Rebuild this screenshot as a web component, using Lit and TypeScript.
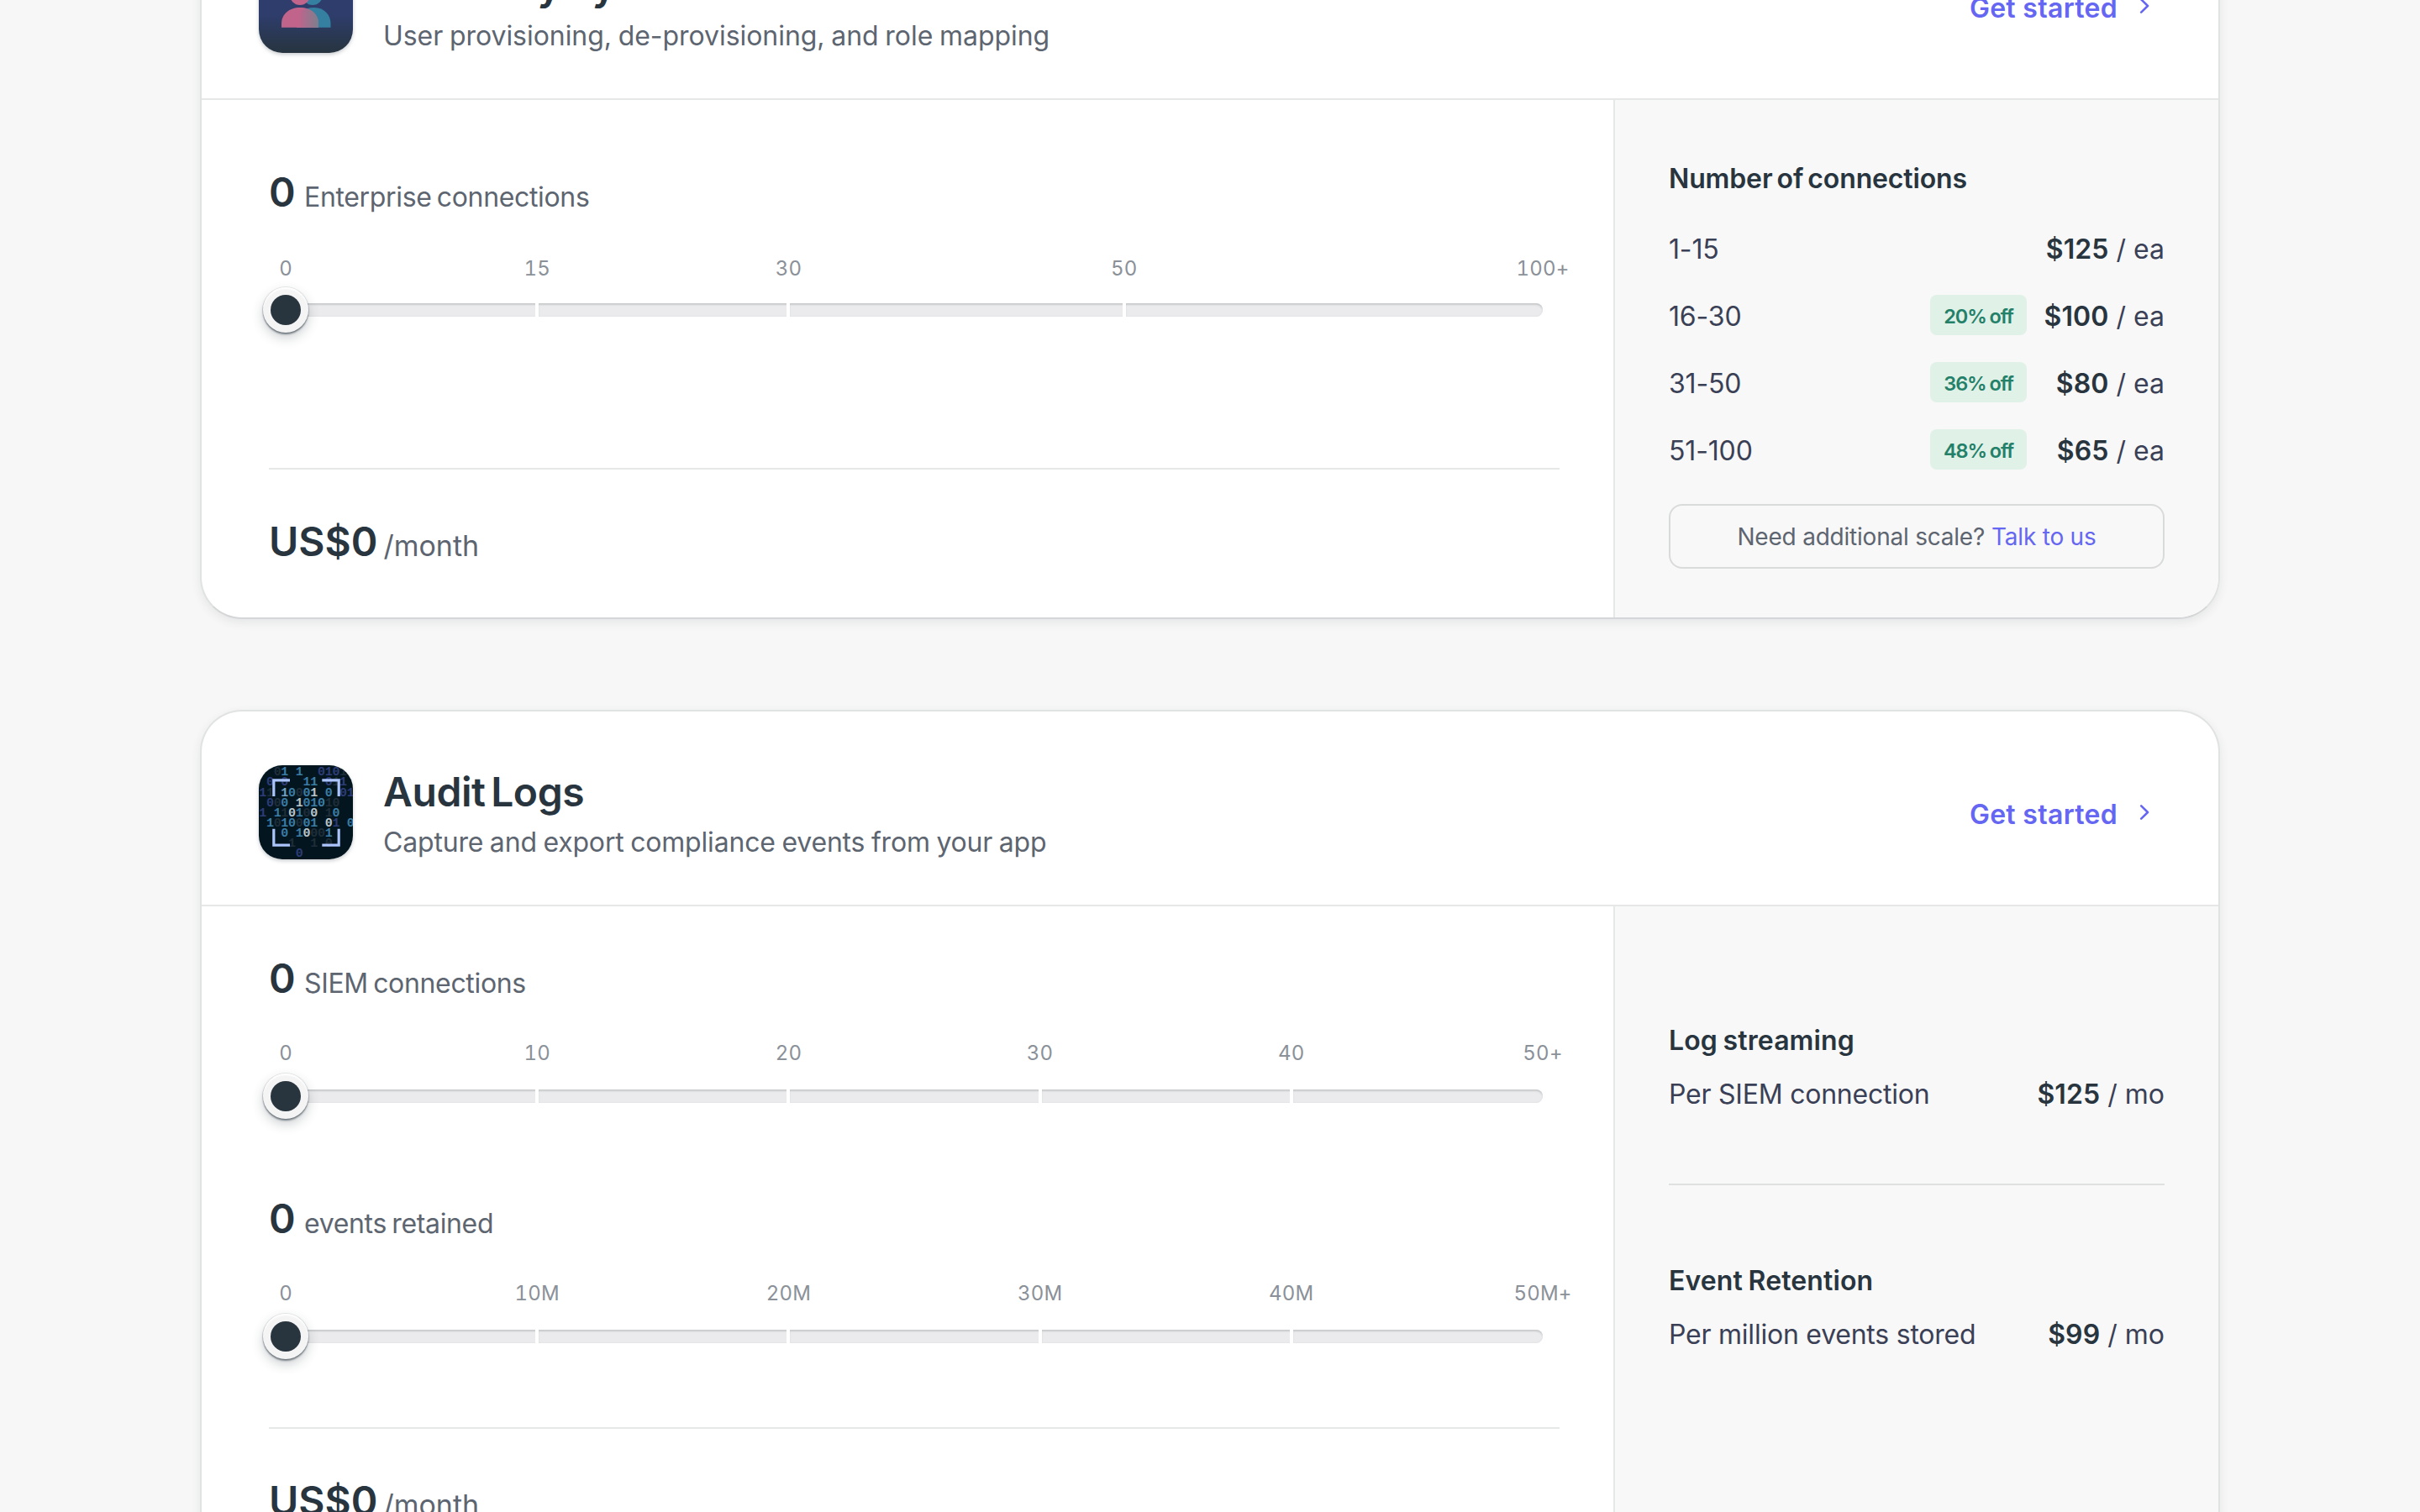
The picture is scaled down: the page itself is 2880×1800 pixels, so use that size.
import { LitElement, html, css, svg, nothing } from "lit";

const sheet = css`
  :host { display: block; }
  * { box-sizing: border-box; margin: 0; }
`;

type Mark = { at: number; label: string };

/* Glyph grid behind the audit icon: [column, digit, tone] per row. */
const TONES: Record<string, string> = {
  d: "#1f2d39", i: "#2d3c76", b: "#3b7ca5", l: "#73a2c0", w: "#b9c4ca",
};
const GRID: string[] = [
  "2:0d 3:1b 5:1b 8:0i 9:1i 10:0i 11:1d",
  "1:0i 3:0i 6:1b 7:1b 9:0i 10:1d 11:1i",
  "0:1i 1:1d 3:1l 4:0b 5:0d 6:0b 7:1w 9:0b 11:0i 12:1i",
  "1:0i 2:0d 3:0b 5:1w 6:0b 7:1b 8:0b 9:1d 10:0d",
  "0:1i 2:1b 3:1d 4:0w 5:1b 6:0d 7:0w 9:1d 10:0b",
  "1:1b 2:0d 3:1b 4:0b 5:0d 6:0b 7:1b 9:0w 10:1i 12:0b",
  "3:0b 5:1b 6:0w 7:0d 8:0d 9:1b",
  "4:1d 7:1d 9:0d",
  "5:0i",
];

class PriceSlider extends LitElement {
  static properties = { count: {}, unit: {}, marks: { attribute: false } };
  declare count: string;
  declare unit: string;
  declare marks: Mark[];
  static styles = [sheet, css`
    .count { display: flex; align-items: baseline; height: 64px; line-height: 64px; }
    .num { font-size: 48px; font-weight: 600; color: #28353f; width: 42px; }
    .unit { font-size: 32px; font-weight: 370; color: #5d6570; letter-spacing: -0.34px; word-spacing: -2.4px; }
    .scale { margin: var(--scale-gap, 43px) 20px 0; display: grid; height: 32px; line-height: 32px; font-size: 24px;
      font-weight: 370; color: #8b9199; font-variant-numeric: tabular-nums; letter-spacing: 0.2px; }
    .stop { width: 0; display: flex; justify-content: center; white-space: nowrap; }
    .track { position: relative; margin: var(--track-gap, 25px) 20px 0; height: 16px; display: grid; }
    .seg { background: #ebebed; box-shadow: inset 0 3px 2px -1px #c8cacc, inset 0 0 2px #d8d9dc; }
    .seg + .seg { border-left: 4px solid #fff; margin-left: -2px; }
    .seg.last { border-radius: 0 8px 8px 0; }
    .knob { position: absolute; left: -27px; top: -19px; width: 54px; height: 54px; border-radius: 50%;
      background: #f4f4f4; display: grid; place-items: center;
      box-shadow: inset 0 2px 2px #fff, 0 0 0 1px rgba(40,53,63,.10), 0 2px 2px rgba(40,53,63,.55), 0 6px 14px rgba(40,53,63,.24); }
    .dot { width: 36px; height: 36px; border-radius: 50%; background: #28353f; }
  `];
  render() {
    const steps = this.marks.slice(1).map((m, i) => m.at - this.marks[i].at);
    const cols = steps.map((s) => `minmax(0, ${s}fr)`).join(" ");
    return html`
      <div class="count"><span class="num">${this.count}</span><span class="unit">${this.unit}</span></div>
      <div class="scale" style="grid-template-columns: ${cols} 0">
        ${this.marks.map((m) => html`<span class="stop"><span>${m.label}</span></span>`)}
      </div>
      <div class="track" style="grid-template-columns: ${cols}">
        ${steps.map((_, i) => html`<span class="seg ${i === steps.length - 1 ? "last" : ""}"></span>`)}
        <span class="knob"><span class="dot"></span></span>
      </div>`;
  }
}
customElements.define("price-slider", PriceSlider);

class AppRoot extends LitElement {
  static styles = [sheet, css`
    :host { height: 1800px; overflow: hidden; background: #f7f7f7; color: #28353f;
      font-family: Inter, "Liberation Sans", sans-serif; }
    .page { display: flex; flex-direction: column; align-items: center; gap: 108px; height: 1800px; overflow: hidden; }
    .card { flex: none; width: 2404px; border: 2px solid #e1e2e2; border-bottom-color: #d5d6d7; border-radius: 50px;
      background: #fff; overflow: hidden; box-shadow: 0 4px 12px rgba(40,53,63,.09); }
    .card.first { margin-top: -115px; }
    .head { height: 232px; border-bottom: 2px solid #e6e7e7; padding: 0 80px 0 68px; display: flex; align-items: flex-start; }
    .icon { width: 112px; height: 112px; margin-top: 64px; border-radius: 28px; flex: none; display: block;
      box-shadow: 0 2px 4px rgba(40,53,63,.25); }
    .heading { margin: 64px 0 0 36px; flex: 1; white-space: nowrap; }
    .title { font-size: 48px; font-weight: 600; line-height: 64px; letter-spacing: -0.45px; word-spacing: -5px; }
    .sub { font-size: 32px; font-weight: 370; line-height: 48px; color: #5d6570; margin-top: 4px; letter-spacing: -0.05px; word-spacing: -1.2px; }
    .sub.tight { letter-spacing: -0.18px; }
    .cta { margin-top: 99px; display: flex; align-items: center; gap: 25px; color: #6566f1; font-size: 32px;
      font-weight: 600; line-height: 48px; letter-spacing: 0.3px; }
    .chev { display: block; width: 15px; height: 22px; margin-top: -6px; }
    .body { display: flex; }
    .main { width: 1680px; padding: 78px 64px 0 80px; }
    .main.two { padding-top: 53.5px; --scale-gap: 41.5px; --track-gap: 26.5px; }
    .main price-slider + price-slider { margin-top: 106px; }
    .total { margin-top: 100.5px; border-top: 2px solid #e6e7e7; padding-top: 54px; height: 178px; display: flex;
      align-items: baseline; line-height: 64px; gap: 7px; }
    .total.tall { margin-top: 180px; }
    .amount { font-size: 48px; font-weight: 600; }
    .per { font-size: 34px; font-weight: 370; color: #5d6570; }
    .side { width: 720px; border-left: 2px solid #e6e7e7; background: #f8f8f8; padding: 70px 64px 0 64px;
      font-size: 32px; line-height: 48px; font-weight: 370; color: #3a4056; }
    .side.two { padding-top: 136px; }
    .label { font-size: 32px; font-weight: 600; line-height: 48px; color: #28353f; letter-spacing: -0.14px; word-spacing: -2.8px; }
    .label.loose { letter-spacing: 0.12px; word-spacing: -1.6px; }
    .tiers { margin-top: 20px; }
    .tier { height: 80px; display: flex; align-items: center; }
    .grow { flex: 1; letter-spacing: -0.15px; }
    .badge { width: 115px; height: 48px; margin: 0 19px 4px 0; border-radius: 8px; background: #e0f1e7; color: #238069;
      font-size: 23.5px; font-weight: 600; line-height: 51px; text-align: center; letter-spacing: -1.15px; word-spacing: -0.8px; }
    .price { min-width: 145px; text-align: right; white-space: pre; }
    .price b { font-weight: 600; color: #28353f; letter-spacing: 0.1px; }
    .more { margin-top: 23px; height: 77px; border: 2px solid #d9dada; border-radius: 16px; display: flex;
      justify-content: center; align-items: center; gap: 8px; font-size: 28px; color: #5d6570; letter-spacing: -0.22px; }
    .talk { color: #6566f1; }
    .line { display: flex; justify-content: space-between; margin-top: 16px; }
    .lname { letter-spacing: -0.23px; }
    .rule { border-top: 2px solid #dfe0e0; margin: 82px 0 90px; }
  `];

  private directoryIcon() {
    return svg`<svg class="icon" viewBox="0 0 112 112">
      <defs>
        <linearGradient id="sky" x1="0" y1="0" x2="0" y2="1"><stop offset="0.6" stop-color="#2e3d6b"/><stop offset="1" stop-color="#27343f"/></linearGradient>
        <linearGradient id="mix" x1="0" y1="0" x2="1" y2="0"><stop offset="0.1" stop-color="#c0648c"/><stop offset="1" stop-color="#7c7f8d"/></linearGradient>
      </defs>
      <rect width="112" height="112" fill="url(#sky)"/>
      <circle cx="64" cy="43" r="12" fill="#357fa1"/>
      <path d="M45 81.7V77C45 65 53 58 66 58C78 58 85.5 67 85.5 77V81.7Z" fill="#357fa1"/>
      <circle cx="49" cy="43" r="12" fill="#c0648c"/>
      <path d="M27 81.7V77C27 66 36 58 49 58C62 58 71 66 71 77V81.7Z" fill="#c0648c"/>
      <path d="M45 81.7V77C45 67 50 60 58 59.4C66 62 71 69 71 77V81.7Z" fill="url(#mix)"/>
    </svg>`;
  }

  private auditIcon() {
    return svg`<svg class="icon" viewBox="0 0 112 112">
      <rect width="112" height="112" fill="#03161f"/>
      <g font-family="'Liberation Mono', monospace" font-size="15" font-weight="700" text-anchor="middle">
        ${GRID.map((row, r) => row.split(" ").map((cell) => {
          const [c, g] = cell.split(":");
          return svg`<text x=${4.7 + Number(c) * 8.72} y=${12.3 + r * 12.12} fill=${TONES[g[1]]}>${g[0]}</text>`;
        }))}
      </g>
      <path d="M37 17.8H17.8V37M75.3 17.8H95.2V37M95.2 75.7V95.2H75.3M37 95.2H17.8V75.7" fill="none" stroke="#abc4fb" stroke-width="3.2"/>
    </svg>`;
  }

  private head(icon: unknown, title: string, sub: string, tight: boolean) {
    return html`<header class="head">
      ${icon}
      <div class="heading">
        <h2 class="title">${title}</h2>
        <p class="sub ${tight ? "tight" : ""}">${sub}</p>
      </div>
      <a class="cta"><span>Get started</span>
        <svg class="chev" viewBox="0 0 15 22"><path d="M3.2 3.4L11 11L3.2 18.6" fill="none" stroke="#6566f1" stroke-width="2.6" stroke-linecap="round" stroke-linejoin="round"/></svg>
      </a>
    </header>`;
  }

  private total(tall: boolean) {
    return html`<div class="total ${tall ? "tall" : ""}"><span class="amount">US$0</span><span class="per">/month</span></div>`;
  }

  private tier(range: string, off: string, price: string) {
    return html`<div class="tier"><span class="grow">${range}</span>
      ${off ? html`<span class="badge">${off}</span>` : nothing}
      <span class="price"><b>${price}</b> / ea</span></div>`;
  }

  render() {
    const fifths = (labels: string[]): Mark[] => labels.map((label, i) => ({ at: i * 20, label }));
    return html`<main class="page">
      <section class="card first">
        ${this.head(this.directoryIcon(), "Directory Sync", "User provisioning, de-provisioning, and role mapping", false)}
        <div class="body">
          <div class="main">
            <price-slider count="0" unit="Enterprise connections" .marks=${[
              { at: 0, label: "0" }, { at: 20, label: "15" }, { at: 40, label: "30" },
              { at: 66.7, label: "50" }, { at: 100, label: "100+" }]}></price-slider>
            ${this.total(true)}
          </div>
          <aside class="side">
            <h3 class="label">Number of connections</h3>
            <div class="tiers">
              ${this.tier("1-15", "", "$125")}
              ${this.tier("16-30", "20% off", "$100")}
              ${this.tier("31-50", "36% off", "$80")}
              ${this.tier("51-100", "48% off", "$65")}
            </div>
            <div class="more"><span>Need additional scale?</span><a class="talk">Talk to us</a></div>
          </aside>
        </div>
      </section>
      <section class="card">
        ${this.head(this.auditIcon(), "Audit Logs", "Capture and export compliance events from your app", true)}
        <div class="body">
          <div class="main two">
            <price-slider count="0" unit="SIEM connections" .marks=${fifths(["0", "10", "20", "30", "40", "50+"])}></price-slider>
            <price-slider count="0" unit="events retained" .marks=${fifths(["0", "10M", "20M", "30M", "40M", "50M+"])}></price-slider>
            ${this.total(false)}
          </div>
          <aside class="side two">
            <h3 class="label loose">Log streaming</h3>
            <div class="line"><span class="lname">Per SIEM connection</span><span class="price"><b>$125</b> / mo</span></div>
            <div class="rule"></div>
            <h3 class="label loose">Event Retention</h3>
            <div class="line"><span class="lname">Per million events stored</span><span class="price"><b>$99</b> / mo</span></div>
          </aside>
        </div>
      </section>
    </main>`;
  }
}
customElements.define("app-root", AppRoot);
